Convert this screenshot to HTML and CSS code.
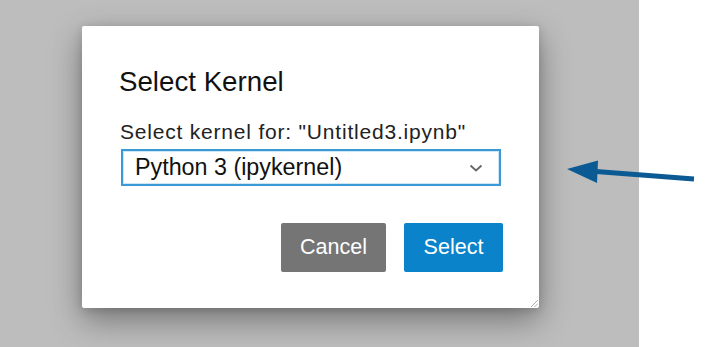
FILE: index.html
```html
<!DOCTYPE html>
<html>
<head>
<meta charset="utf-8">
<link rel="stylesheet" href="styles.css">
</head>
<body>
<div class="backdrop">
  <div class="dialog">
    <h1 class="title">Select Kernel</h1>
    <div class="label">Select kernel for: "Untitled3.ipynb"</div>
    <div class="select">
      <span class="select-text">Python 3 (ipykernel)</span>
      <svg class="chevron" width="14" height="8" viewBox="0 0 14 8"><path d="M1.5 1.5 L7 6.5 L12.5 1.5" fill="none" stroke="#666" stroke-width="1.8"/></svg>
    </div>
    <div class="buttons">
      <button class="btn btn-cancel">Cancel</button>
      <button class="btn btn-select">Select</button>
    </div>
    <svg class="resize" width="8" height="8" viewBox="0 0 8 8"><path d="M1 8 L8 1 M4.5 8 L8 4.5" stroke="#999" stroke-width="0.8"/></svg>
  </div>
</div>
<div class="side"></div>
<svg class="arrow" width="708" height="347" viewBox="0 0 708 347">
  <path d="M596 171.5 L694 179" stroke="#0b5a94" stroke-width="5" fill="none"/>
  <path d="M567 169 L598 160.5 L597 183 Z" fill="#0b5a94"/>
</svg>
</body>
</html>
```
FILE: styles.css
```css
html, body {
  margin: 0;
  padding: 0;
}
body {
  display: flex;
  width: 708px;
  height: 347px;
  overflow: hidden;
  font-family: "Liberation Sans", Arial, sans-serif;
  position: relative;
}
.backdrop {
  width: 639px;
  height: 347px;
  background: #bdbdbd;
  padding: 26px 0 0 82px;
  box-sizing: border-box;
  flex: none;
}
.side {
  flex: 1;
  background: #fff;
}
.dialog {
  width: 457px;
  height: 282px;
  background: #fff;
  border-radius: 2px;
  box-shadow: 0 12px 32px rgba(0,0,0,0.38), 0 2px 10px rgba(0,0,0,0.15);
  box-sizing: border-box;
  padding: 40px 37px 0 37px;
  position: relative;
  display: flex;
  flex-direction: column;
}
.title {
  margin: 0;
  font-size: 27.7px;
  font-weight: normal;
  line-height: 32px;
  color: #111;
}
.label {
  margin-top: 24px;
  font-size: 21px;
  letter-spacing: 0.8px;
  line-height: 20px;
  color: #222;
  padding-left: 1px;
}
.select {
  margin-top: 7px;
  margin-left: 2px;
  width: 380px;
  height: 37px;
  box-sizing: border-box;
  border: 2px solid #3b9ad6;
  box-shadow: inset 0 0 0 1px #cfe6f6;
  display: flex;
  align-items: center;
  justify-content: space-between;
  padding: 0 16px 0 12px;
}
.select-text {
  font-size: 23.3px;
  color: #111;
}
.chevron {
  display: block;
}
.buttons {
  margin-top: 37px;
  display: flex;
  justify-content: flex-end;
  gap: 18px;
  width: 384px;
}
.btn {
  font-family: "Liberation Sans", Arial, sans-serif;
  font-size: 21.5px;
  color: #fff;
  border: none;
  border-radius: 2px;
  height: 49px;
  padding: 0;
}
.btn-cancel {
  background: #757575;
  width: 105px;
}
.btn-select {
  background: #0a83cb;
  width: 99px;
}
.resize {
  position: absolute;
  right: 1px;
  bottom: 1px;
}
.arrow {
  position: absolute;
  left: 0;
  top: 0;
  pointer-events: none;
}
```
